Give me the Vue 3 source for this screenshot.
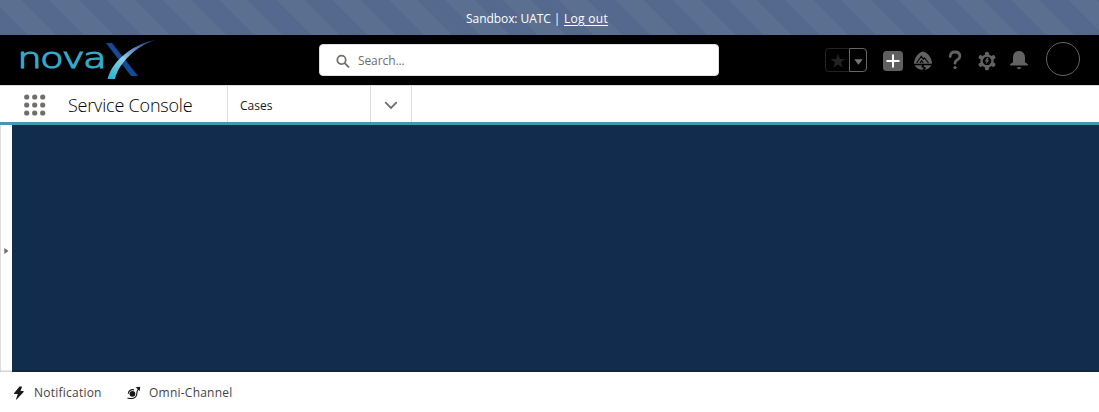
<script setup>
const dots = Array.from({ length: 9 }, (_, i) => ({ x: 2.7 + (i % 3) * 8, y: 3 + Math.floor(i / 3) * 8 }))
const teeth = [0, 60, 120, 180, 240, 300]
</script>

<template>
  <div class="page">
    <div class="sandbox"><span class="env">Sandbox: UATC |</span><a class="logout">Log out</a></div>

    <header class="header">
      <svg class="logo" width="140" height="44" viewBox="0 0 140 44">
        <defs>
          <linearGradient id="swoosh" x1="0" y1="1" x2="1" y2="0">
            <stop offset="0" stop-color="#22aed0" />
            <stop offset=".42" stop-color="#8bd3e4" />
            <stop offset=".7" stop-color="#5879bb" />
            <stop offset="1" stop-color="#173f7e" />
          </linearGradient>
        </defs>
        <text class="wordmark" transform="translate(-.8 29.500) scale(1.340 1)">nova</text>
        <path d="M88 5h6l26 33h-7z" fill="#164a96" />
        <path d="M137 2C119 5 95 20 89.500 41h7.500C101 24 119 8 137 2z" fill="url(#swoosh)" />
      </svg>

      <div class="search">
        <svg width="14" height="14" viewBox="0 0 14 14" fill="none" stroke="#706e6b">
          <circle cx="5.500" cy="5.900" r="4.200" stroke-width="1.700" />
          <path d="M8.700 9.100l3.800 3.800" stroke-width="1.800" stroke-linecap="round" />
        </svg>
        <span class="placeholder">Search...</span>
      </div>

      <div class="tools">
        <div class="favorites">
          <span class="star"><svg width="16" height="16" viewBox="0 0 16 16"><path d="M8 .7l1.900 5.300h5.600L11 9.300l1.700 5.500L8 11.500l-4.700 3.300L5 9.300.5 6h5.600z" fill="#222" /></svg></span>
          <span class="more"><svg width="9" height="6" viewBox="0 0 9 6"><path d="M.3.300h8.400L4.500 5.800z" fill="#777" /></svg></span>
        </div>
        <svg class="plus" width="20" height="20" viewBox="0 0 20 20"><rect width="20" height="20" rx="3.500" fill="#5f5f5f" /><path d="M10 3.500v13M3.500 10h13" stroke="#fff" stroke-width="2" /></svg>
        <svg class="trail" width="20" height="20" viewBox="0 0 20 20">
          <path d="M1 12.800C1 7 5 2.800 7.700 1.200q2.300-1.200 4.600 0C15 2.800 19 7 19 12.800z" fill="#626262" />
          <path d="M3.600 12l4.700-6.700 2 3.100 1.200-1.500 4 5.100M7 12l1.600-2.200 1.600 2.200" fill="none" stroke="#000" stroke-width="1.100" />
          <path d="M1.800 14.300h7.400l-1 1.700 2.300 1.100-1 1.700C6 18.800 3 17.100 1.800 14.300zM11 14.300h7.200c-1 2.500-3.400 4.100-6.200 4.500l1-2.400-2.400-.9z" fill="#626262" />
        </svg>
        <svg class="help" width="14" height="20" viewBox="0 0 14 20"><path d="M2.200 6.500C2.200 3.500 4 2 7 2s4.900 1.700 4.900 4.300C11.900 9.700 7 9.500 7 13.200" fill="none" stroke="#626262" stroke-width="2.800" stroke-linecap="round" /><circle cx="7" cy="17.600" r="1.600" fill="#626262" /></svg>
        <svg class="gear" width="20" height="20" viewBox="0 0 20 20">
          <g fill="#626262"><rect v-for="t in teeth" :key="t" x="8" y=".7" width="4" height="5" rx="1.500" :transform="`rotate(${t} 10 10)`" /></g>
          <circle cx="10" cy="10" r="5.500" fill="none" stroke="#626262" stroke-width="2.400" />
          <path d="M10 6.800L7.800 10.400h1.800L8.800 13.200l3.400-4h-1.800l1.300-2.400z" fill="#626262" />
        </svg>
        <svg class="bell" width="20" height="20" viewBox="0 0 20 20"><path d="M4 7.500C4 3.500 6.500 1 10 1s6 2.500 6 6.500v4.300q0 .8.800 1.200l1.200.6q1 .5 1 1.100 0 .8-1 .8H2q-1 0-1-.8 0-.6 1-1.100l1.200-.6q.8-.4.800-1.200z" fill="#626262" /><path d="M7.700 17.200h4.600q-.5 2-2.300 2t-2.300-2z" fill="#626262" /></svg>
        <span class="avatar"></span>
      </div>
    </header>

    <nav class="nav">
      <div class="app">
        <svg width="22" height="22" viewBox="0 0 22 22" fill="#706e6b"><circle v-for="(d, i) in dots" :key="i" :cx="d.x" :cy="d.y" r="2.600" /></svg>
        <span class="app-name">Service Console</span>
      </div>
      <div class="tab"><span>Cases</span></div>
      <div class="chevron"><svg width="14" height="9" viewBox="0 0 14 9"><path d="M1.700 1.700L7 7l5.300-5.300" fill="none" stroke="#706e6b" stroke-width="1.800" stroke-linecap="round" /></svg></div>
    </nav>

    <main class="workspace">
      <aside class="rail"><svg width="5" height="6" viewBox="0 0 5 6"><path d="M.3 0L4.500 3 .3 6z" fill="#706e6b" /></svg></aside>
      <div class="canvas"></div>
    </main>

    <footer class="utility">
      <svg class="bolt" width="12" height="14" viewBox="0 0 12 14"><path d="M6.500.5L1 7.300q-.4.700.4.700h3.400L3 13.200q0 .7.600.2l7-7.500q.4-.8-.4-.8H7.500L9 1q.1-.6-.5-.6z" fill="#181818" /></svg>
      <span class="notification">Notification</span>
      <svg class="omni" width="14" height="14" viewBox="0 0 14 14"><circle cx="5.400" cy="7.800" r="2.900" fill="#181818" /><path d="M7 3.900C3.800 3 1.300 5 1.300 7.800M.5 11.900c4.500 1.600 9.500.2 9.400-5.200q0-1.800 1.600-3.700" fill="none" stroke="#181818" stroke-width="1.100" /><path d="M8.700 1.300L13.200.7l-.5 4.500z" fill="#181818" /></svg>
      <span class="channel">Omni-Channel</span>
    </footer>
  </div>
</template>

<style>
body { margin: 0; overflow: hidden; }
</style>

<style scoped>
.page { width: 1099px; height: 412px; display: flex; flex-direction: column; background: #fff; font-family: "Open Sans", "Noto Sans", sans-serif; font-size: 12px; color: #181818; }
.page * { box-sizing: border-box; }
svg { display: block; flex: none; }
span, a { white-space: nowrap; }
.sandbox { height: 35px; flex: none; display: flex; align-items: center; padding: 2px 0 0 466px; color: #fff; background: repeating-linear-gradient(45deg, #54698d 0 20px, #5b6f91 20px 40px); }
.env { width: 98px; letter-spacing: -.06px; }
.logout { letter-spacing: .3px; text-decoration: underline; text-underline-offset: 2px; }
.header { height: 50px; flex: none; display: flex; align-items: flex-start; background: #000; }
.logo { margin: 3px 0 0 18px; }
.wordmark { font-family: "DejaVu Sans", sans-serif; font-weight: 200; font-size: 29px; letter-spacing: -1.4px; fill: #35a9c8; stroke: #35a9c8; stroke-width: 1.100px; }
.search { margin: 9px 0 0 161px; width: 400px; height: 32px; border: 1px solid #ddd; border-radius: 4px; background: #fff; display: flex; align-items: center; padding: 2px 0 0 16px; color: #706e6b; }
.placeholder { margin-left: 8px; padding-bottom: 2px; letter-spacing: -.1px; }
.tools { display: flex; align-items: center; height: 50px; margin-left: 106px; }
.favorites { display: flex; width: 42px; height: 24px; margin-right: 16px; }
.star, .more { display: flex; align-items: center; justify-content: center; border: 1px solid #222; }
.star { width: 24px; border-right: 0; border-radius: 4px 0 0 4px; padding-top: 2px; }
.more { width: 18px; border-color: #666; border-radius: 0 4px 4px 0; padding-top: 3px; }
.plus, .trail, .help, .gear, .bell { margin-top: 1px; }
.trail { margin-left: 10px; }
.help { margin-left: 15px; margin-top: 0; }
.gear { margin-left: 15px; }
.bell { margin-left: 12px; margin-top: -1px; }
.avatar { width: 34px; height: 34px; margin: -2px 0 0 17px; border: 1px solid #656565; border-radius: 50%; }
.nav { height: 40px; flex: none; display: flex; border-top: 1px solid #ddd; border-bottom: 3px solid #409ab5; background: #fff; }
.app { width: 228px; display: flex; align-items: center; padding: 2px 0 0 24px; border-right: 1px solid #ddd; }
.app-name { margin-left: 22px; font-size: 18px; font-weight: 300; letter-spacing: -.2px; line-height: 24px; color: #000; }
.tab { width: 143px; display: flex; align-items: center; padding: 2px 0 0 12px; border-right: 1px solid #ddd; }
.chevron { width: 41px; display: flex; align-items: center; justify-content: center; padding-top: 2px; border-right: 1px solid #ddd; }
.workspace { flex: 1; display: flex; min-height: 0; }
.rail { width: 12px; display: flex; align-items: center; padding: 4px 0 0 3px; border-left: 1px solid #ddd; background: #fff; }
.canvas { flex: 1; background: #122c4d; }
.utility { position: relative; height: 40px; flex: none; display: flex; align-items: center; padding-left: 13px; background: #fff; box-shadow: 0 -1px 2px rgba(0, 0, 0, .25); color: #444; letter-spacing: .23px; }
.bolt, .omni { margin-top: 2px; }
.notification { width: 93px; margin-left: 9px; }
.channel { margin-left: 8px; }
</style>
